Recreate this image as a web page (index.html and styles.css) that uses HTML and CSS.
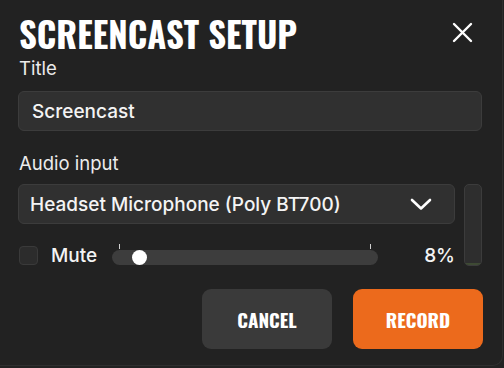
FILE: index.html
```html
<!DOCTYPE html>
<html>
<head>
<meta charset="utf-8">
<link rel="stylesheet" href="styles.css">
</head>
<body>
<div class="dialog">
  <div class="header">
    <h1 class="heading">SCREENCAST SETUP</h1>
    <button class="close" aria-label="Close">
      <svg width="21" height="21" viewBox="0 0 21 21"><path d="M2 2 L19 19 M19 2 L2 19" stroke="#fff" stroke-width="2.4" stroke-linecap="round"/></svg>
    </button>
  </div>
  <div class="label label-title">Title</div>
  <div class="field">Screencast</div>
  <div class="label label-audio">Audio input</div>
  <div class="audio">
    <div class="audio-main">
      <div class="field select">
        <span>Headset Microphone (Poly BT700)</span>
        <svg class="chev" width="22" height="13" viewBox="0 0 22 13"><path d="M2 2 L11 10.5 L20 2" fill="none" stroke="#fff" stroke-width="2.6" stroke-linecap="round" stroke-linejoin="round"/></svg>
      </div>
      <div class="mute-row">
        <span class="check"></span>
        <span class="mute">Mute</span>
        <div class="slider">
          <span class="tick tick-l"></span>
          <span class="tick tick-r"></span>
          <span class="thumb"></span>
        </div>
        <span class="pct">8%</span>
      </div>
    </div>
    <div class="meter"><div class="meter-fill"></div></div>
  </div>
  <div class="actions">
    <button class="btn cancel">CANCEL</button>
    <button class="btn record">RECORD</button>
  </div>
</div>
</body>
</html>
```
FILE: styles.css
```css
html, body {
  margin: 0;
  padding: 0;
  background: #222222;
}
body {
  width: 504px;
  height: 368px;
  overflow: hidden;
  font-family: Inter, "Noto Sans", sans-serif;
  color: #ececec;
}
.dialog {
  box-sizing: border-box;
  width: 503px;
  height: 366px;
  border-right: 1px solid #2f2f2f;
  border-bottom: 1px solid #2f2f2f;
  border-bottom-right-radius: 10px;
  padding: 14px 20px 0 18px;
}
.header {
  display: flex;
  justify-content: space-between;
  align-items: center;
  height: 40px;
}
.heading {
  margin: 0 0 0 1px;
  font-family: Oswald, "Liberation Sans Narrow", "DejaVu Sans Condensed", sans-serif;
  font-stretch: condensed;
  font-weight: 700;
  font-size: 34.7px;
  line-height: 40px;
  color: #ffffff;
}
.close {
  background: none;
  border: 0;
  padding: 0;
  margin: -4px 9px 0 0;
  width: 21px;
  height: 21px;
  display: flex;
}
.label {
  font-size: 18.5px;
  line-height: 22px;
  padding-left: 1px;
}
.label-title {
  margin-top: 3px;
}
.field {
  box-sizing: border-box;
  height: 40px;
  margin-top: 12px;
  background: #303030;
  border: 1px solid #3c3c3c;
  border-radius: 6px;
  padding: 0 13px;
  display: flex;
  align-items: center;
  font-size: 19px;
  font-weight: 500;
  color: #f4f4f4;
}
.label-audio {
  margin-top: 21px;
}
.audio {
  display: flex;
  align-items: flex-start;
  gap: 9px;
  margin-top: 10px;
}
.audio-main {
  flex: 1;
}
.select {
  margin-top: 0;
  padding: 0 22px 0 11px;
  justify-content: space-between;
}
.mute-row {
  display: flex;
  align-items: center;
  margin-top: 21px;
  height: 20px;
}
.check {
  box-sizing: border-box;
  width: 19px;
  height: 19px;
  border: 1px solid #3a3a3a;
  background: #2c2c2c;
  border-radius: 4px;
  margin-left: 1px;
}
.mute {
  margin-left: 13px;
  font-size: 19px;
  font-weight: 500;
  color: #f4f4f4;
}
.slider {
  position: relative;
  align-self: flex-start;
  margin: 5px 0 0 15px;
  width: 266px;
  height: 15px;
  border-radius: 8px;
  background: #3d3d3d;
}
.tick {
  position: absolute;
  top: -6px;
  width: 1px;
  height: 5px;
  background: #d0d0d0;
}
.tick-l { left: 7px; }
.tick-r { left: 258px; }
.thumb {
  position: absolute;
  left: 20px;
  top: 0;
  width: 15px;
  height: 15px;
  border-radius: 50%;
  background: #ffffff;
}
.pct {
  margin-left: auto;
  font-size: 19px;
  font-weight: 500;
  color: #f4f4f4;
}
.meter {
  box-sizing: border-box;
  flex: none;
  width: 18px;
  height: 82px;
  border: 1px solid #3c3c3c;
  background: #2e2e2e;
  border-radius: 5px;
  overflow: hidden;
  display: flex;
  flex-direction: column;
  justify-content: flex-end;
}
.meter-fill {
  height: 2px;
  background: #3e4a34;
}
.actions {
  display: flex;
  justify-content: flex-end;
  gap: 21px;
  margin: 23px -1px 0 0;
}
.btn {
  width: 130px;
  height: 60px;
  border: 0;
  border-radius: 9px;
  font-family: Oswald, "Liberation Sans Narrow", "DejaVu Sans Condensed", sans-serif;
  font-stretch: condensed;
  font-weight: 700;
  font-size: 19px;
  color: #ffffff;
  padding: 0;
}
.cancel {
  background: #3a3a3a;
}
.record {
  background: #ec6a1c;
}
```
